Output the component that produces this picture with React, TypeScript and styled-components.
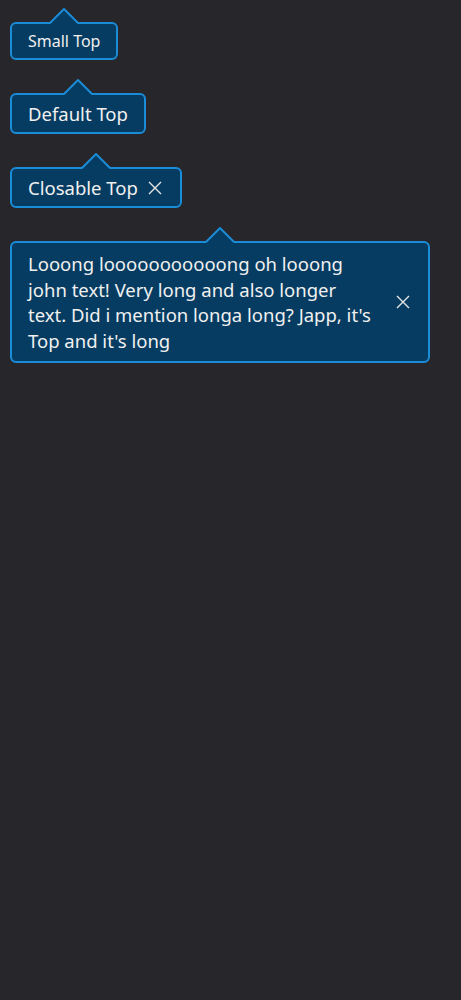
import React from 'react';
import styled, { createGlobalStyle } from 'styled-components';

const GlobalStyle = createGlobalStyle`
  body {
    margin: 0;
    background: #27262b;
    font-family: "Noto Sans", "Open Sans", sans-serif;
  }
`;

const BG = '#063c61';
const BORDER = '#1a8cd8';

const longWord = 'l' + 'o'.repeat(11) + 'ng';
const longText = `Looong ${longWord} oh looong john text! Very long and also longer text. Did i mention longa long? Japp, it's Top and it's long`;

const Page = styled.div`
  display: flex;
  flex-direction: column;
  align-items: flex-start;
  gap: 33px;
  padding: 22px 10px;
  min-height: 1000px;
  box-sizing: border-box;
`;

const Bubble = styled.div<{ $small?: boolean }>`
  position: relative;
  display: flex;
  align-items: center;
  gap: 6px;
  max-width: 420px;
  box-sizing: border-box;
  padding: 8px 16px;
  background: ${BG};
  border: 2px solid ${BORDER};
  border-radius: 6px;
  color: #f0f0f0;
  font-size: ${(p) => (p.$small ? '16px' : '18.5px')};
  line-height: ${(p) => (p.$small ? '18px' : '21px')};
`;

const LongText = styled.span`
  flex: 1;
  margin-right: 13px;
  line-height: 25.6px;
`;

const Arrow = styled.svg`
  position: absolute;
  top: -17px;
  left: 50%;
  transform: translateX(-50%);
  overflow: visible;
`;

const CloseButton = styled.button`
  display: flex;
  align-items: center;
  justify-content: center;
  flex-shrink: 0;
  width: 18px;
  height: 21px;
  padding: 0;
  margin-left: 2px;
  border: none;
  background: transparent;
  color: #e6e6e6;
  cursor: pointer;
`;

function TipArrow() {
  return (
    <Arrow width="28" height="17" viewBox="0 0 28 17">
      <path d="M0 17 L14 3 L28 17 Z" fill={BG} />
      <path
        d="M0 16 L14 2 L28 16"
        fill="none"
        stroke={BORDER}
        strokeWidth="2"
        strokeLinejoin="round"
      />
    </Arrow>
  );
}

function Close() {
  return (
    <CloseButton aria-label="close">
      <svg width="14" height="14" viewBox="0 0 14 14">
        <path d="M1 1 L13 13 M13 1 L1 13" stroke="currentColor" strokeWidth="1.4" />
      </svg>
    </CloseButton>
  );
}

export default function App() {
  return (
    <>
      <GlobalStyle />
      <Page>
        <Bubble $small>
          <TipArrow />
          Small Top
        </Bubble>
        <Bubble>
          <TipArrow />
          Default Top
        </Bubble>
        <Bubble>
          <TipArrow />
          Closable Top
          <Close />
        </Bubble>
        <Bubble>
          <TipArrow />
          <LongText>{longText}</LongText>
          <Close />
        </Bubble>
      </Page>
    </>
  );
}
